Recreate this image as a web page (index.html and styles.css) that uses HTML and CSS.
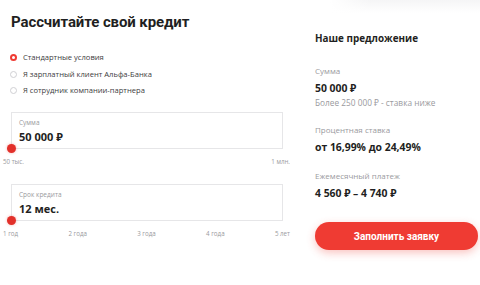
FILE: index.html
```html
<!DOCTYPE html>
<html lang="ru">
<head>
    <meta charset="UTF-8">
    <meta name="viewport" content="width=device-width, initial-scale=1.0">
    <title>Кредитный калькулятор</title>
    <link rel="stylesheet" href="styles.css">
</head>
<body>
    <div class="calculator">
        <div class="form">
            <h1>Рассчитайте свой кредит</h1>

            <div class="options">
                <label class="option">
                    <span class="radio checked"></span>
                    Стандартные условия
                </label>
                <label class="option">
                    <span class="radio"></span>
                    Я зарплатный клиент Альфа-Банка
                </label>
                <label class="option">
                    <span class="radio"></span>
                    Я сотрудник компании-партнера
                </label>
            </div>

            <div class="field">
                <div class="field-box">
                    <div class="field-label">Сумма</div>
                    <div class="field-value">50 000 ₽</div>
                </div>
                <div class="slider">
                    <span class="thumb"></span>
                </div>
                <div class="scale">
                    <span>50 тыс.</span>
                    <span>1 млн.</span>
                </div>
            </div>

            <div class="field">
                <div class="field-box">
                    <div class="field-label">Срок кредита</div>
                    <div class="field-value">12 мес.</div>
                </div>
                <div class="slider">
                    <span class="thumb"></span>
                </div>
                <div class="scale">
                    <span>1 год</span>
                    <span>2 года</span>
                    <span>3 года</span>
                    <span>4 года</span>
                    <span>5 лет</span>
                </div>
            </div>
        </div>

        <div class="offer">
            <h2>Наше предложение</h2>

            <div class="offer-item">
                <div class="offer-label">Сумма</div>
                <div class="offer-value">50 000 ₽</div>
                <div class="offer-note">Более 250 000 ₽ - ставка ниже</div>
            </div>

            <div class="offer-item">
                <div class="offer-label">Процентная ставка</div>
                <div class="offer-value">от 16,99% до 24,49%</div>
            </div>

            <div class="offer-item">
                <div class="offer-label">Ежемесячный платеж</div>
                <div class="offer-value">4 560 ₽ – 4 740 ₽</div>
            </div>

            <button class="submit">Заполнить заявку</button>
        </div>
    </div>
</body>
</html>
```

FILE: styles.css
```css
:root {
    --red: #ef3b33;
    --text: #1f1f22;
    --muted: #9a9a9e;
    --border: #e6e6e8;
}

* {
    margin: 0;
    padding: 0;
    box-sizing: border-box;
    font-family: 'Open Sans', 'Noto Sans', sans-serif;
}

body {
    background: #ffffff;
    color: var(--text);
    width: 480px;
    height: 285px;
    overflow: hidden;
}

.calculator {
    display: flex;
}

.form {
    width: 300px;
    padding: 10px 0 0 0;
}

h1 {
    font-family: Roboto, 'Open Sans', sans-serif;
    font-size: 15px;
    font-weight: 700;
    line-height: 24px;
    margin-left: 11px;
    letter-spacing: -0.1px;
}

.options {
    display: flex;
    flex-direction: column;
    gap: 3px;
    margin: 17px 0 0 10px;
}

.option {
    display: flex;
    align-items: center;
    gap: 6px;
    font-size: 7.6px;
    line-height: 13.5px;
    color: #3c3c40;
}

.radio {
    width: 7px;
    height: 7px;
    border-radius: 50%;
    border: 1px solid #d0d0d3;
}

.radio.checked {
    border: 2px solid var(--red);
}

.field {
    margin-top: 14px;
}

.field + .field {
    margin-top: 18px;
}

.field-box {
    margin-left: 11px;
    width: 272px;
    height: 36px;
    border: 1px solid var(--border);
    border-bottom: none;
    padding: 5px 0 0 7px;
}

.field-label {
    font-size: 6.5px;
    line-height: 9px;
    color: var(--muted);
}

.field-value {
    font-size: 11px;
    font-weight: 700;
    line-height: 16px;
    margin-top: 2px;
}

.slider {
    position: relative;
    margin-left: 11px;
    width: 272px;
    height: 1px;
    background: var(--border);
}

.thumb {
    position: absolute;
    left: -4px;
    top: -4px;
    width: 9px;
    height: 9px;
    border-radius: 50%;
    background: #e2302a;
    box-shadow: 0 0 3px rgba(226, 48, 42, 0.35);
}

.scale {
    display: flex;
    justify-content: space-between;
    width: 290px;
    padding: 0 0 0 3px;
    margin-top: 9px;
    font-size: 6.2px;
    line-height: 8px;
    color: var(--muted);
}

.offer {
    flex: 1;
    padding: 31px 0 0 15px;
    background:
        linear-gradient(to right, #ffffff 30px, rgba(255, 255, 255, 0) 70px),
        linear-gradient(to bottom, #f5f5f6 0, #ffffff 13px);
    background-repeat: no-repeat;
}

h2 {
    font-size: 9.9px;
    font-weight: 700;
    line-height: 14px;
}

.offer-item {
    margin-top: 21px;
}

.offer-item + .offer-item {
    margin-top: 17px;
}

.offer-label {
    font-size: 8px;
    line-height: 10px;
    color: var(--muted);
}

.offer-value {
    font-size: 10.4px;
    font-weight: 700;
    line-height: 14px;
    margin-top: 5px;
}

.offer-note {
    font-size: 8.3px;
    line-height: 10px;
    color: var(--muted);
    margin-top: 3px;
}

.submit {
    margin-top: 22px;
    width: 163px;
    height: 28px;
    border: none;
    border-radius: 14px;
    background: var(--red);
    color: #ffffff;
    font-family: Roboto, 'Open Sans', sans-serif;
    font-size: 10px;
    font-weight: 700;
    box-shadow: 0 3px 8px rgba(239, 59, 51, 0.3);
    cursor: pointer;
}
```
